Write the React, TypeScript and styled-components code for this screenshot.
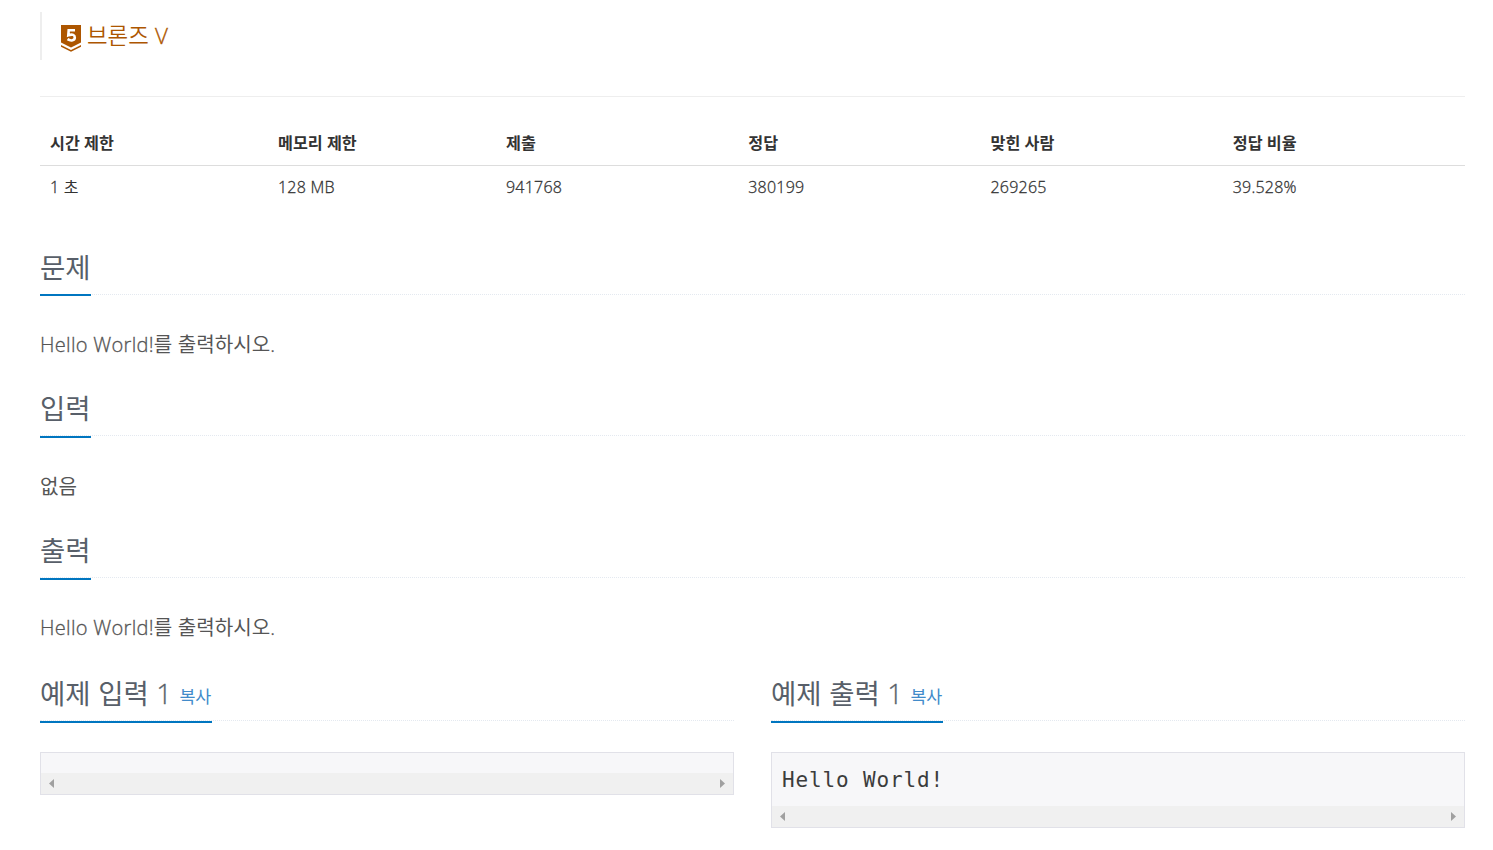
import React from "react";
import styled, { createGlobalStyle } from "styled-components";

const Global = createGlobalStyle`
  *, *::before, *::after { box-sizing: border-box; }
  body { margin: 0; background: #fff; color: #333; font-family: "Open Sans", "Noto Sans CJK KR", sans-serif; font-size: 16px; overflow: hidden; }
`;

const Page = styled.main`
  height: 850px;
  padding: 12px 28px 0 40px;
`;
const Light = styled.span`
  font-weight: 300;
  letter-spacing: 0.014em;
  -webkit-text-stroke: 0.3px currentColor;
`;
const Tier = styled.blockquote`
  display: flex;
  align-items: center;
  gap: 5px;
  height: 48px;
  margin: 0 0 36px;
  padding: 0 0 1px 18px;
  border-left: 2px solid #eee;
  color: #ad5600;
  font-size: 22.4px;
  line-height: 30px;
`;
const TierName = styled.span`
  margin-top: 1px;
  font-weight: 350;
`;
const TierIcon = styled.svg`
  width: 22px;
  height: 28px;
  margin-top: 6px;
`;
const TableWrap = styled.section`
  height: 153px;
  padding-top: 23px;
  border-top: 1px solid #eee;
`;
const Table = styled.table`
  width: 100%;
  border-collapse: collapse;
  table-layout: fixed;
`;
const Col = styled.col<{ $w: number }>`
  width: ${(p) => p.$w}%;
`;
const Th = styled.th`
  height: 45px;
  padding: 0 10px 1px;
  border-bottom: 1px solid #ddd;
  text-align: left;
  font-size: 16.2px;
  font-weight: 700;
`;
const Td = styled.td`
  height: 43px;
  padding: 0 10px;
  line-height: 22px;
`;
const Section = styled.section<{ $h: number }>`
  height: ${(p) => p.$h}px;
`;
const Headline = styled.div`
  height: 46px;
  border-bottom: 1px dotted #e4e9f0;
`;
const Title = styled.h2<{ $h: number }>`
  display: inline-flex;
  align-items: baseline;
  gap: 7px;
  height: ${(p) => p.$h}px;
  margin: 0;
  padding-top: 1px;
  border-bottom: 2px solid #0076c0;
  color: #585f69;
  font-size: 27.5px;
  line-height: 36px;
  font-weight: 400;
  white-space: nowrap;
`;
const Copy = styled.a`
  margin-right: 1px;
  color: #428bca;
  font-size: 17.4px;
  line-height: 34px;
  transform: translateY(-1px);
`;
const Body = styled.p<{ $top: number }>`
  margin: ${(p) => p.$top}px 0 0;
  color: #555;
  font-size: 20.1px;
  line-height: 30px;
`;
const Samples = styled.div`
  display: grid;
  grid-template-columns: 694px 694px;
  gap: 37px;
`;
const Sample = styled.section``;
const Box = styled.div<{ $h: number }>`
  display: flex;
  flex-direction: column;
  height: ${(p) => p.$h}px;
  margin-top: 31px;
  border: 1px solid #e1e1e8;
  background: #f7f7f9;
`;
const Code = styled.pre`
  margin: 0;
  padding: 12px 10px 0;
  color: #3c3c3c;
  font: 21px/30px "DejaVu Sans Mono", monospace;
  letter-spacing: 0.86px;
`;
const Scrollbar = styled.div`
  display: flex;
  justify-content: space-between;
  align-items: center;
  height: 21px;
  margin-top: auto;
  padding: 0 8px 1px 8px;
  background: #f0f0f0;
`;
const Arrow = styled.svg`
  width: 5px;
  height: 9px;
  fill: #a0a0a0;
`;

const stats = [
  ["시간 제한", "1 초", 16],
  ["메모리 제한", "128 MB", 16],
  ["제출", "941768", 17],
  ["정답", "380199", 17],
  ["맞힌 사람", "269265", 17],
  ["정답 비율", "39.528%", 17],
] as const;

const sections = [
  { title: "문제", text: "Hello World!를 출력하시오.", height: 141, rule: 47, top: 35 },
  { title: "입력", text: "없음", height: 142, rule: 48, top: 36 },
  { title: "출력", text: "Hello World!를 출력하시오.", height: 143, rule: 48, top: 35 },
];

/* Latin letters and digits are set lighter than Hangul. */
function Mixed({ text }: { text: string }) {
  return (
    <>
      {text.split(/([\x20-\x7e]+)/).filter(Boolean).map((run, i) =>
        run.charCodeAt(0) < 128 ? <Light key={i}>{run}</Light> : run,
      )}
    </>
  );
}

function Example({ title, code, height }: { title: string; code?: string; height: number }) {
  return (
    <Sample>
      <Headline>
        <Title $h={48}>
          <span><Mixed text={title} /></span>
          <Copy>복사</Copy>
        </Title>
      </Headline>
      <Box $h={height}>
        {code && <Code>{code}</Code>}
        <Scrollbar>
          <Arrow viewBox="0 0 5 9"><path d="M5 0v9L0 4.500z" /></Arrow>
          <Arrow viewBox="0 0 5 9"><path d="M0 0v9l5-4.500z" /></Arrow>
        </Scrollbar>
      </Box>
    </Sample>
  );
}

export default function App() {
  return (
    <Page>
      <Global />
      <Tier>
        <TierIcon viewBox="0 0 22 28">
          <path fill="#ad5600" d="M1 0h20v17.500l-10 5-10-5z M1 20l10 5 10-5v1.800l-10 5-10-5z" />
          <path fill="none" stroke="#fff" strokeWidth="2.600" d="M15 5.300H8.700l-.4 5c4.500-1.500 6.500-.3 6.500 2.200 0 3-3.800 3.900-7.300 1.700" />
        </TierIcon>
        <TierName><Mixed text="브론즈 V" /></TierName>
      </Tier>
      <TableWrap>
        <Table>
          <colgroup>{stats.map((s) => <Col key={s[0]} $w={s[2]} />)}</colgroup>
          <thead><tr>{stats.map((s) => <Th key={s[0]}>{s[0]}</Th>)}</tr></thead>
          <tbody><tr>{stats.map((s) => <Td key={s[0]}><Mixed text={s[1]} /></Td>)}</tr></tbody>
        </Table>
      </TableWrap>
      {sections.map((s) => (
        <Section key={s.title} $h={s.height}>
          <Headline><Title $h={s.rule}>{s.title}</Title></Headline>
          <Body $top={s.top}><Mixed text={s.text} /></Body>
        </Section>
      ))}
      <Samples>
        <Example title="예제 입력 1" height={43} />
        <Example title="예제 출력 1" code="Hello World!" height={76} />
      </Samples>
    </Page>
  );
}
